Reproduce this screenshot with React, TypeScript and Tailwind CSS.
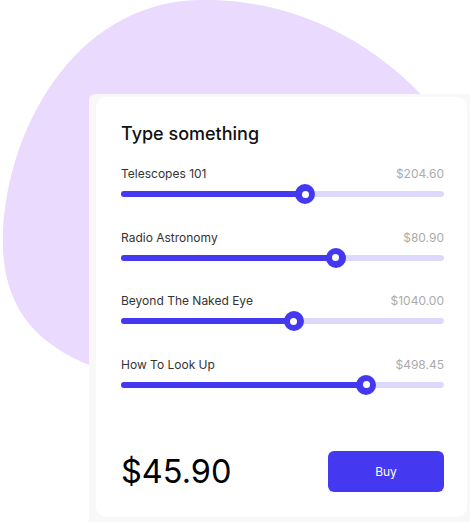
import React from 'react';

type Course = {
  id: string;
  title: string;
  price: string;
  value: number;
};

const courses: Course[] = [
  { id: 'telescopes', title: 'Telescopes 101', price: '$204.60', value: 57 },
  { id: 'radio', title: 'Radio Astronomy', price: '$80.90', value: 66.5 },
  { id: 'naked-eye', title: 'Beyond The Naked Eye', price: '$1040.00', value: 53.5 },
  { id: 'look-up', title: 'How To Look Up', price: '$498.45', value: 76 },
];

const Slider = ({ value }: { value: number }) => {
  return (
    <div className="relative h-5 flex items-center">
      <div className="w-full h-[6px] rounded-full bg-[#dcd9fd]">
        <div className="h-full rounded-full bg-[#4439f1]" style={{ width: `${value}%` }} />
      </div>
      <div
        className="absolute top-0 -ml-[10px] w-5 h-5 rounded-full bg-[#4439f1] flex items-center justify-center"
        style={{ left: `${value}%` }}
      >
        <div className="w-[7px] h-[7px] rounded-full bg-white" />
      </div>
    </div>
  );
};

const App = () => {
  return (
    <div className="relative w-[470px] h-[522px] overflow-hidden bg-white font-['Inter',sans-serif]">
      {/* background blob */}
      <svg className="absolute left-0 top-0" width="470" height="522" viewBox="0 0 470 522">
        <path
          d="M 92 366 C 40 346 6 312 3 250 C 0 140 70 2 200 0 C 300 -2 380 48 428 102 L 428 366 Z"
          fill="#e9dafe"
        />
      </svg>

      <div className="relative ml-[89px] mt-[94px] pl-[7px] pt-[3px] pr-[3px] pb-[5px] bg-[#f8f8f8] rounded-tl-[6px]">
        <div className="w-[371px] h-[420px] bg-white rounded-[10px] pl-[25px] pr-[23px] pt-[25px] pb-[25px] flex flex-col">
          <h1 className="text-[18px] leading-[24px] font-medium text-[#111]">Type something</h1>

          <div className="mt-[20px] flex flex-col gap-[25.5px]">
            {courses.map((course) => (
              <div key={course.id}>
                <div className="flex justify-between items-center h-4 text-[12px] leading-4">
                  <span className="text-[#333]">{course.title}</span>
                  <span className="text-[#ababab]">{course.price}</span>
                </div>
                <div className="mt-[2px]">
                  <Slider value={course.value} />
                </div>
              </div>
            ))}
          </div>

          <div className="mt-auto flex items-center justify-between">
            <span className="text-[32.5px] leading-9 text-black">$45.90</span>
            <button className="w-[116px] h-[41px] rounded-[6px] bg-[#4439f1] text-white text-[12px]">
              Buy
            </button>
          </div>
        </div>
      </div>
    </div>
  );
};

export default App;
